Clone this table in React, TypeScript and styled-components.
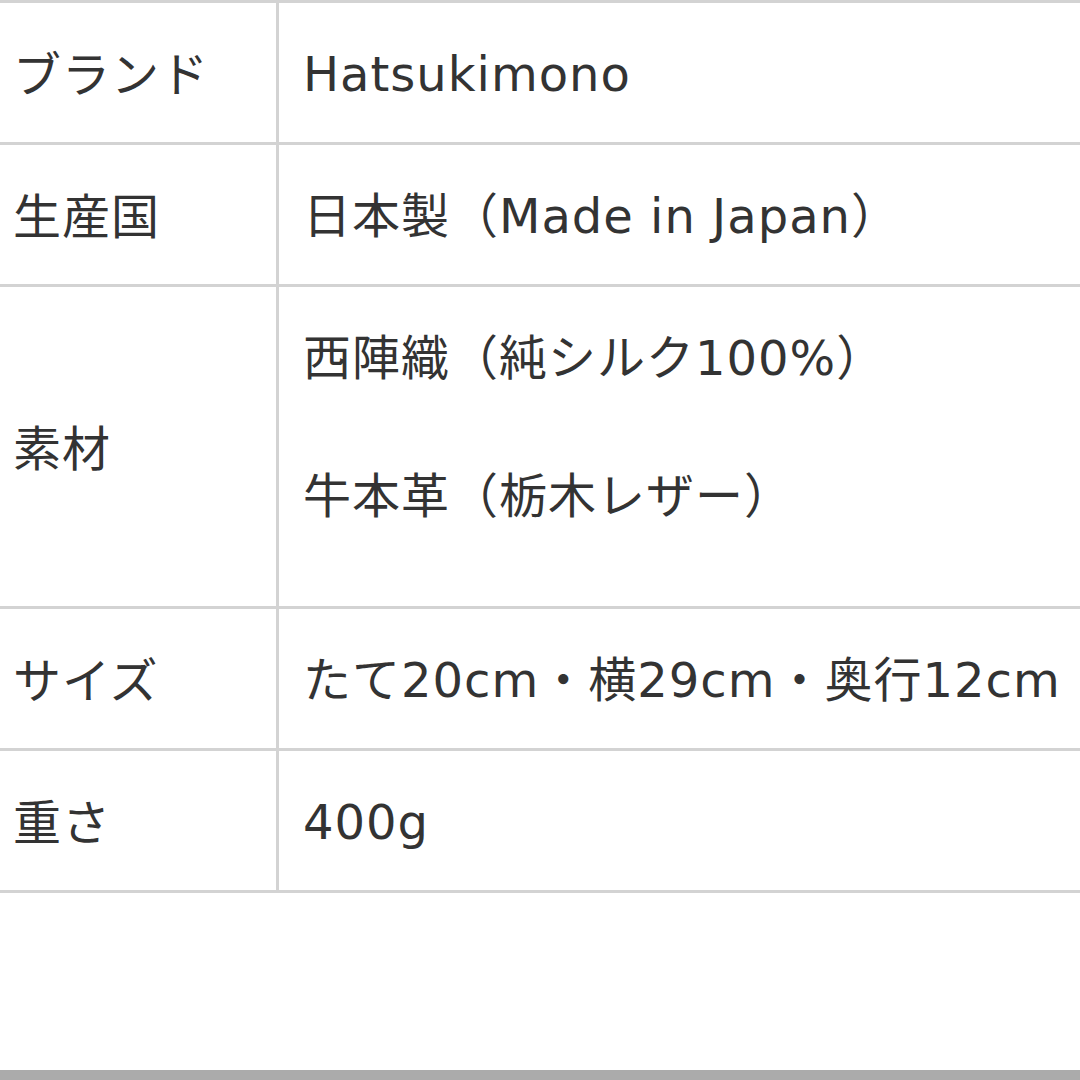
import React from "react";
import styled, { createGlobalStyle } from "styled-components";

const Global = createGlobalStyle`
  html, body { margin: 0; padding: 0; background: #ffffff; }
  body {
    font-family: "DejaVu Sans", "Noto Sans CJK JP", sans-serif;
    color: #333333;
  }
`;

const Page = styled.div`
  min-height: 1080px;
  width: 1080px;
  display: flex;
  flex-direction: column;
  background: #ffffff;
  overflow: hidden;
`;

const Table = styled.div`
  display: grid;
  grid-template-columns: 279px 1fr;
  border-top: 3px solid #d3d3d3;
`;

const Row = styled.div`
  display: contents;
`;

const Label = styled.div`
  display: flex;
  align-items: center;
  padding: 38px 0 32px 13px;
  border-right: 3px solid #d3d3d3;
  border-bottom: 3px solid #d3d3d3;
  font-size: 48px;
  letter-spacing: 1px;
  line-height: 69px;
  white-space: nowrap;
`;

const Value = styled.div`
  padding: 37px 0 33px 24px;
  border-bottom: 3px solid #d3d3d3;
  font-size: 48px;
  letter-spacing: 1px;
  line-height: 69px;
  white-space: nowrap;
  overflow: hidden;
`;

const Line = styled.p<{ $gapBefore?: number; $gapAfter?: number }>`
  margin: ${(p) => p.$gapBefore ?? 0}px 0 ${(p) => p.$gapAfter ?? 0}px 0;
`;

const Spacer = styled.div`
  flex: 1;
`;

const BottomBar = styled.div`
  height: 10px;
  background: #ababab;
`;

type Spec = { label: string; lines: string[] };

const rows: Spec[] = [
  { label: "ブランド", lines: ["Hatsukimono"] },
  { label: "生産国", lines: ["日本製（Made in Japan）"] },
  { label: "素材", lines: ["西陣織（純シルク100%）", "牛本革（栃木レザー）"] },
  { label: "サイズ", lines: ["たて20cm・横29cm・奥行12cm"] },
  { label: "重さ", lines: ["400g"] },
];

export default function App() {
  return (
    <Page>
      <Global />
      <Table>
        {rows.map((r) => (
          <Row key={r.label}>
            <Label>{r.label}</Label>
            <Value>
              {r.lines.map((l, i) => (
                <Line
                  key={l}
                  $gapBefore={i > 0 ? 69 : 0}
                  $gapAfter={r.lines.length > 1 && i === r.lines.length - 1 ? 42 : 0}
                >
                  {l}
                </Line>
              ))}
            </Value>
          </Row>
        ))}
      </Table>
      <Spacer />
      <BottomBar />
    </Page>
  );
}
